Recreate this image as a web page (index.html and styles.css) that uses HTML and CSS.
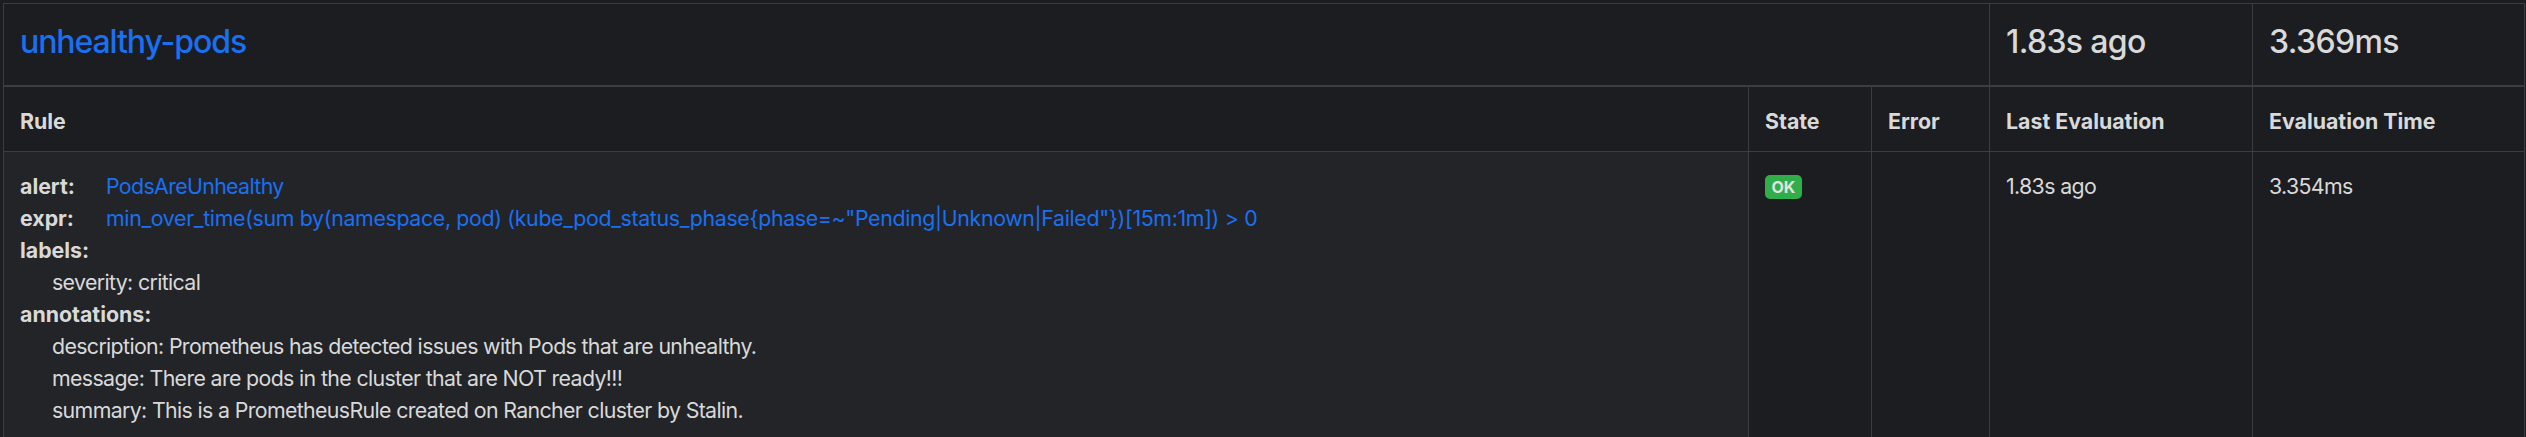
FILE: index.html
```html
<!DOCTYPE html>
<html lang="en">
<head>
<meta charset="utf-8">
<title>Rules</title>
<link rel="stylesheet" href="styles.css">
</head>
<body>
<table class="rules">
  <colgroup>
    <col class="c-rule">
    <col class="c-state">
    <col class="c-error">
    <col class="c-last">
    <col class="c-time">
  </colgroup>
  <thead>
    <tr class="group-row">
      <td colspan="3"><a class="group-link" href="#unhealthy-pods"><h4 class="group-title">unhealthy-pods</h4></a></td>
      <td><h4 class="group-meta">1.83s ago</h4></td>
      <td><h4 class="group-meta">3.369ms</h4></td>
    </tr>
  </thead>
  <tbody>
    <tr class="col-head">
      <td>Rule</td>
      <td>State</td>
      <td>Error</td>
      <td>Last Evaluation</td>
      <td>Evaluation Time</td>
    </tr>
    <tr class="rule-row">
      <td class="rule-cell">
        <div class="rule-line"><span class="rule-key">alert:</span><a class="rule-val" href="#">PodsAreUnhealthy</a></div>
        <div class="rule-line"><span class="rule-key">expr:</span><a class="rule-val rule-expr" href="#">min_over_time(sum by(namespace, pod) (kube_pod_status_phase{phase=~"Pending|Unknown|Failed"})[15m:1m]) &gt; 0</a></div>
        <div class="rule-line"><span class="rule-key">labels:</span></div>
        <div class="rule-sub">severity: critical</div>
        <div class="rule-line"><span class="rule-key">annotations:</span></div>
        <div class="rule-sub">description: Prometheus has detected issues with Pods that are unhealthy.</div>
        <div class="rule-sub">message: There are pods in the cluster that are NOT ready!!!</div>
        <div class="rule-sub">summary: This is a PrometheusRule created on Rancher cluster by Stalin.</div>
      </td>
      <td><span class="badge-ok">OK</span></td>
      <td></td>
      <td>1.83s ago</td>
      <td>3.354ms</td>
    </tr>
  </tbody>
</table>
</body>
</html>
```
FILE: styles.css
```css
html, body {
  margin: 0;
  padding: 0;
  background: #1b1d21;
}
body {
  padding: 3px 0 0 3px;
  font-family: Inter, "Liberation Sans", sans-serif;
  font-size: 21.333px;
  line-height: 32px;
  color: #d9d9d9;
  letter-spacing: -0.03em;
}
.rules {
  border-collapse: collapse;
  table-layout: fixed;
  width: 2521px;
  background: #1b1d21;
}
.c-rule { width: 1745px; }
.c-state { width: 123px; }
.c-error { width: 118px; }
.c-last { width: 263px; }
.c-time { width: 272px; }
.rules td {
  border: 1px solid #3a3d42;
  padding: 17.5px 16px 14.5px;
  vertical-align: top;
  text-align: left;
}
.rules thead td {
  border-bottom: 2px solid #3a3d42;
  padding-top: 18.5px;
  padding-bottom: 13.5px;
}
.group-link {
  color: #1a70f2;
  text-decoration: none;
}
.group-title,
.group-meta {
  margin: 0 0 10.667px;
  font-size: 32px;
  line-height: 1.2;
  font-weight: 500;
}
.group-title {
  letter-spacing: -0.034em;
}
.group-meta {
  color: #d9d9d9;
}
.col-head td {
  font-weight: 700;
  letter-spacing: 0;
}
.rule-cell {
  background: #222428;
}
.rule-line {
  display: flex;
}
.rule-key {
  font-weight: 700;
  letter-spacing: 0;
  width: 86px;
  flex: none;
}
.rule-val {
  color: #1a70f2;
  text-decoration: none;
}
.rule-expr {
  letter-spacing: -0.016em;
}
.rule-sub {
  padding-left: 32px;
}
.badge-ok {
  display: inline-block;
  padding: 4px 6.4px;
  font-size: 16px;
  line-height: 1;
  font-weight: 700;
  letter-spacing: 0;
  border-radius: 5px;
  background: #2fae4a;
  color: #e2e2e2;
  vertical-align: top;
  margin-top: 5px;
}
```
